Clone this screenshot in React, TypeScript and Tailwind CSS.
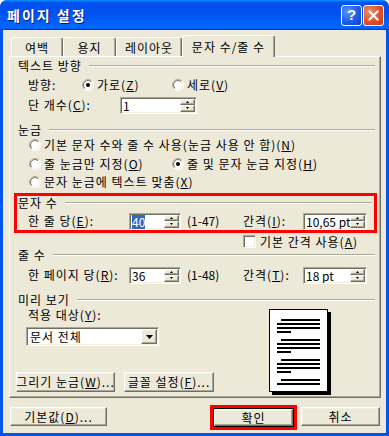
const raised =
  "border border-t-white border-l-white border-r-[#716F64] border-b-[#716F64] shadow-[inset_-1px_-1px_0_#ACA899,inset_1px_1px_0_#F1EFE2]";
const sunken =
  "border border-t-[#ACA899] border-l-[#ACA899] border-r-white border-b-white shadow-[inset_1px_1px_0_#716F64,inset_-1px_-1px_0_#F1EFE2]";

function Radio({ checked }: { checked?: boolean }) {
  return (
    <svg width="12" height="12" viewBox="0 0 12 12" className="shrink-0">
      <defs>
        <linearGradient id="ro" x1="0" y1="0" x2="1" y2="1">
          <stop offset="0.5" stopColor="#ACA899" />
          <stop offset="0.5" stopColor="#FFFFFF" />
        </linearGradient>
        <linearGradient id="ri" x1="0" y1="0" x2="1" y2="1">
          <stop offset="0.5" stopColor="#716F64" />
          <stop offset="0.5" stopColor="#F1EFE2" />
        </linearGradient>
      </defs>
      <circle cx="6" cy="6" r="5.5" fill="#fff" stroke="url(#ro)" />
      <circle cx="6" cy="6" r="4.5" fill="#fff" stroke="url(#ri)" />
      {checked && <circle cx="6" cy="6" r="2" fill="#000" />}
    </svg>
  );
}

function Arrow({ up, w = 5 }: { up?: boolean; w?: number }) {
  const h = Math.ceil(w / 2);
  return (
    <svg width={w} height={h} viewBox={`0 0 ${w} ${h}`}>
      <polygon points={up ? `0,${h} ${w},${h} ${w / 2},0` : `0,0 ${w},0 ${w / 2},${h}`} fill="#000" />
    </svg>
  );
}

function Spin({ className, children }: { className: string; children: React.ReactNode }) {
  return (
    <div className={`${sunken} flex h-[17px] bg-white tracking-normal ${className}`}>
      <div className="flex-1 flex items-center pl-[2px] pt-px overflow-hidden whitespace-nowrap">{children}</div>
      <div className="flex flex-col w-[16px] py-px pr-px">
        <div className={`${raised} flex-1 flex items-center justify-center bg-[#ECE9D8]`}>
          <Arrow up w={3} />
        </div>
        <div className={`${raised} flex-1 flex items-center justify-center bg-[#ECE9D8]`}>
          <Arrow w={3} />
        </div>
      </div>
    </div>
  );
}

function Group({ title, className = "" }: { title: string; className?: string }) {
  return (
    <div className={`flex items-center h-[14px] ${className}`}>
      <span className="whitespace-nowrap">{title}</span>
      <div className="flex-1 ml-[7px] h-[2px] border-t border-t-[#ACA899] border-b border-b-white" />
    </div>
  );
}

function Button({ className, children }: { className: string; children: React.ReactNode }) {
  return (
    <div className={`${raised} flex items-center justify-center bg-[#ECE9D8] whitespace-nowrap ${className}`}>
      {children}
    </div>
  );
}

function Preview() {
  const paras = [10, 30, 50, 70];
  return (
    <svg width="62" height="86" viewBox="0 0 62 86">
      <rect x="3" y="3" width="59" height="83" fill="#000" />
      <rect x="0.5" y="0.5" width="58" height="82" fill="#fff" stroke="#000" />
      {paras.map((y, i) => (
        <g key={i} fill="#000">
          <rect x="12" y={y} width="39" height="2" />
          <rect x="8" y={y + 4} width="43" height="2" />
          {i < 3 && <rect x="8" y={y + 8} width="43" height="2" />}
          {i < 3 && <rect x="8" y={y + 12} width="14" height="2" />}
        </g>
      ))}
    </svg>
  );
}

function TitleBar() {
  return (
    <div className="flex items-center h-[30px] pl-[7px] pr-[5px] bg-[linear-gradient(180deg,#0997FF_0%,#0053EE_8%,#0050EE_40%,#0066FF_88%,#0066FF_93%,#005BFF_95%,#003DD7_96%,#003DD7_100%)]">
      <span className="flex-1 text-[14px] font-bold tracking-[2px] text-white [text-shadow:1px_1px_0_#0A1883]">페이지 설정</span>
      <div className="flex gap-[1px] tracking-normal">
        <div className="w-[21px] h-[21px] rounded-[3px] border border-white bg-[radial-gradient(circle_at_30%_30%,#5A93FF_0%,#1D5CEB_55%,#0A3FC8_100%)] flex items-center justify-center text-white font-bold text-[15px] font-['Liberation_Sans',sans-serif]">
          ?
        </div>
        <div className="w-[21px] h-[21px] rounded-[3px] border border-white bg-[radial-gradient(circle_at_30%_30%,#F08B6A_0%,#E0502A_55%,#C23A14_100%)] flex items-center justify-center">
          <svg width="11" height="11" viewBox="0 0 11 11">
            <path d="M1.5 1.5 L9.5 9.5 M9.5 1.5 L1.5 9.5" stroke="#fff" strokeWidth="2.2" strokeLinecap="square" />
          </svg>
        </div>
      </div>
    </div>
  );
}

function Tab({ label, w, active }: { label: string; w: string; active?: boolean }) {
  return active ? (
    <div
      className={`relative z-10 -mb-px h-[22px] ${w} flex items-start justify-center pt-[4px] bg-[#ECE9D8] rounded-t-[3px] border-t border-l border-r border-t-white border-l-white border-r-[#716F64] shadow-[inset_-1px_0_0_#ACA899]`}
    >
      {label}
    </div>
  ) : (
    <div
      className={`h-[19px] ${w} flex items-center justify-center pt-px bg-[#ECE9D8] rounded-t-[3px] border-t border-l border-r border-t-white border-l-white border-r-[#716F64] shadow-[inset_-1px_0_0_#ACA899]`}
    >
      {label}
    </div>
  );
}

export default function App() {
  return (
    <div className="w-[389px] h-[436px] bg-white font-['Noto_Sans_CJK_KR',sans-serif] text-[12px] leading-[14px] tracking-[1px] text-black">
      <div className="flex flex-col w-[389px] h-[436px] rounded-t-[7px] bg-[#0055EA] overflow-hidden">
        <TitleBar />
        <div className="flex flex-col flex-1 mx-[3px] mb-[3px] bg-[#ECE9D8]">
          {/* tabs */}
          <div className="flex items-end h-[21px] mt-[5px] ml-[8px]">
            <Tab label="여백" w="w-[52px]" />
            <Tab label="용지" w="w-[53px]" />
            <Tab label="레이아웃" w="w-[66px]" />
            <Tab label="문자 수/줄 수" w="w-[93px]" active />
          </div>

          {/* tab panel */}
          <div className="ml-[6px] w-[372px] h-[342px] flex flex-col border border-t-white border-l-white border-r-[#716F64] border-b-[#716F64] shadow-[inset_-1px_-1px_0_#ACA899]">
            <Group title="텍스트 방향" className="mt-[2px] pl-[8px] pr-[5px]" />
            <div className="flex items-center h-[18px] mt-[3px] pl-[18px]">
              <span className="w-[54px]">방향:</span>
              <div className="flex items-center w-[90px]">
                <Radio checked />
                <span className="ml-[3px]">
                  가로(<u>Z</u>)
                </span>
              </div>
              <div className="flex items-center">
                <Radio />
                <span className="ml-[3px]">
                  세로(<u>V</u>)
                </span>
              </div>
            </div>
            <div className="flex items-center h-[18px] mt-[2px] pl-[18px]">
              <span className="w-[92px]">
                단 개수(<u>C</u>):
              </span>
              <Spin className="w-[77px]">1</Spin>
            </div>

            <Group title="눈금" className="mt-[9px] pl-[8px] pr-[5px]" />
            <div className="flex items-center h-[16px] pl-[19px]">
              <Radio />
              <span className="ml-[3px]">
                기본 문자 수와 줄 수 사용(눈금 사용 안 함)(<u>N</u>)
              </span>
            </div>
            <div className="flex items-center h-[16px] mt-[3px] pl-[19px]">
              <div className="flex items-center w-[143px]">
                <Radio />
                <span className="ml-[3px]">
                  줄 눈금만 지정(<u>O</u>)
                </span>
              </div>
              <Radio checked />
              <span className="ml-[3px]">
                줄 및 문자 눈금 지정(<u>H</u>)
              </span>
            </div>
            <div className="flex items-center h-[16px] mt-[2px] pl-[19px]">
              <Radio />
              <span className="ml-[3px]">
                문자 눈금에 텍스트 맞춤(<u>X</u>)
              </span>
            </div>

            {/* highlighted group */}
            <div className="mt-[3px] ml-[4px] mr-[3px] border-[3px] border-[#FF0000]">
              <Group title="문자 수" className="pl-[1px] pr-[2px]" />
              <div className="flex items-center h-[18px] mt-[2px] pl-[11px]">
                <span className="w-[101px]">
                  한 줄 당(<u>E</u>):
                </span>
                <Spin className="w-[52px]">
                  <span className="bg-[#316AC5] text-white">40</span>
                </Spin>
                <span className="ml-[6px] w-[56px] tracking-normal">(1-47)</span>
                <span className="w-[60px]">
                  간격(<u>I</u>):
                </span>
                <Spin className="w-[64px]">10,65 pt</Spin>
              </div>
            </div>

            <div className="flex items-center h-[13px] mt-[2px] pl-[233px]">
              <div className={`${sunken} w-[13px] h-[13px] bg-white`} />
              <span className="ml-[4px]">
                기본 간격 사용(<u>A</u>)
              </span>
            </div>

            <Group title="줄 수" className="pl-[8px] pr-[5px]" />
            <div className="flex items-center h-[18px] mt-[4px] pl-[18px]">
              <span className="w-[101px]">
                한 페이지 당(<u>R</u>):
              </span>
              <Spin className="w-[52px]">36</Spin>
              <span className="ml-[6px] w-[56px] tracking-normal">(1-48)</span>
              <span className="w-[60px]">
                간격(<u>T</u>):
              </span>
              <Spin className="w-[64px]">18 pt</Spin>
            </div>

            <Group title="미리 보기" className="mt-[9px] pl-[8px] pr-[5px]" />
            <div className="flex">
              <div className="w-[259px] flex flex-col pl-[6px]">
                <span className="mt-[1px] h-[14px] pl-[12px]">
                  적용 대상(<u>Y</u>):
                </span>
                <div className={`${sunken} mt-[5px] ml-[10px] w-[133px] h-[19px] flex bg-white`}>
                  <span className="flex-1 flex items-center pl-[3px]">문서 전체</span>
                  <div className="py-px pr-px flex">
                    <div className={`${raised} w-[16px] flex items-center justify-center bg-[#ECE9D8]`}>
                      <Arrow w={7} />
                    </div>
                  </div>
                </div>
                <div className="flex mt-[26px]">
                  <Button className="w-[99px] h-[20px]">
                    그리기 눈금(<u>W</u>)...
                  </Button>
                  <Button className="ml-[9px] w-[90px] h-[20px]">
                    글꼴 설정(<u>F</u>)...
                  </Button>
                </div>
              </div>
              <div className="mt-[2px]">
                <Preview />
              </div>
            </div>
          </div>

          {/* dialog buttons */}
          <div className="flex items-start mt-[7px]">
            <Button className="ml-[7px] mt-[2px] w-[97px] h-[19px]">
              기본값(<u>D</u>)...
            </Button>
            <div className="ml-[103px] border-[3px] border-[#FF0000]">
              <div className="border border-black">
                <Button className="w-[79px] h-[17px]">확인</Button>
              </div>
            </div>
            <Button className="ml-[4px] mt-[2px] w-[79px] h-[19px]">취소</Button>
          </div>
        </div>
      </div>
    </div>
  );
}
